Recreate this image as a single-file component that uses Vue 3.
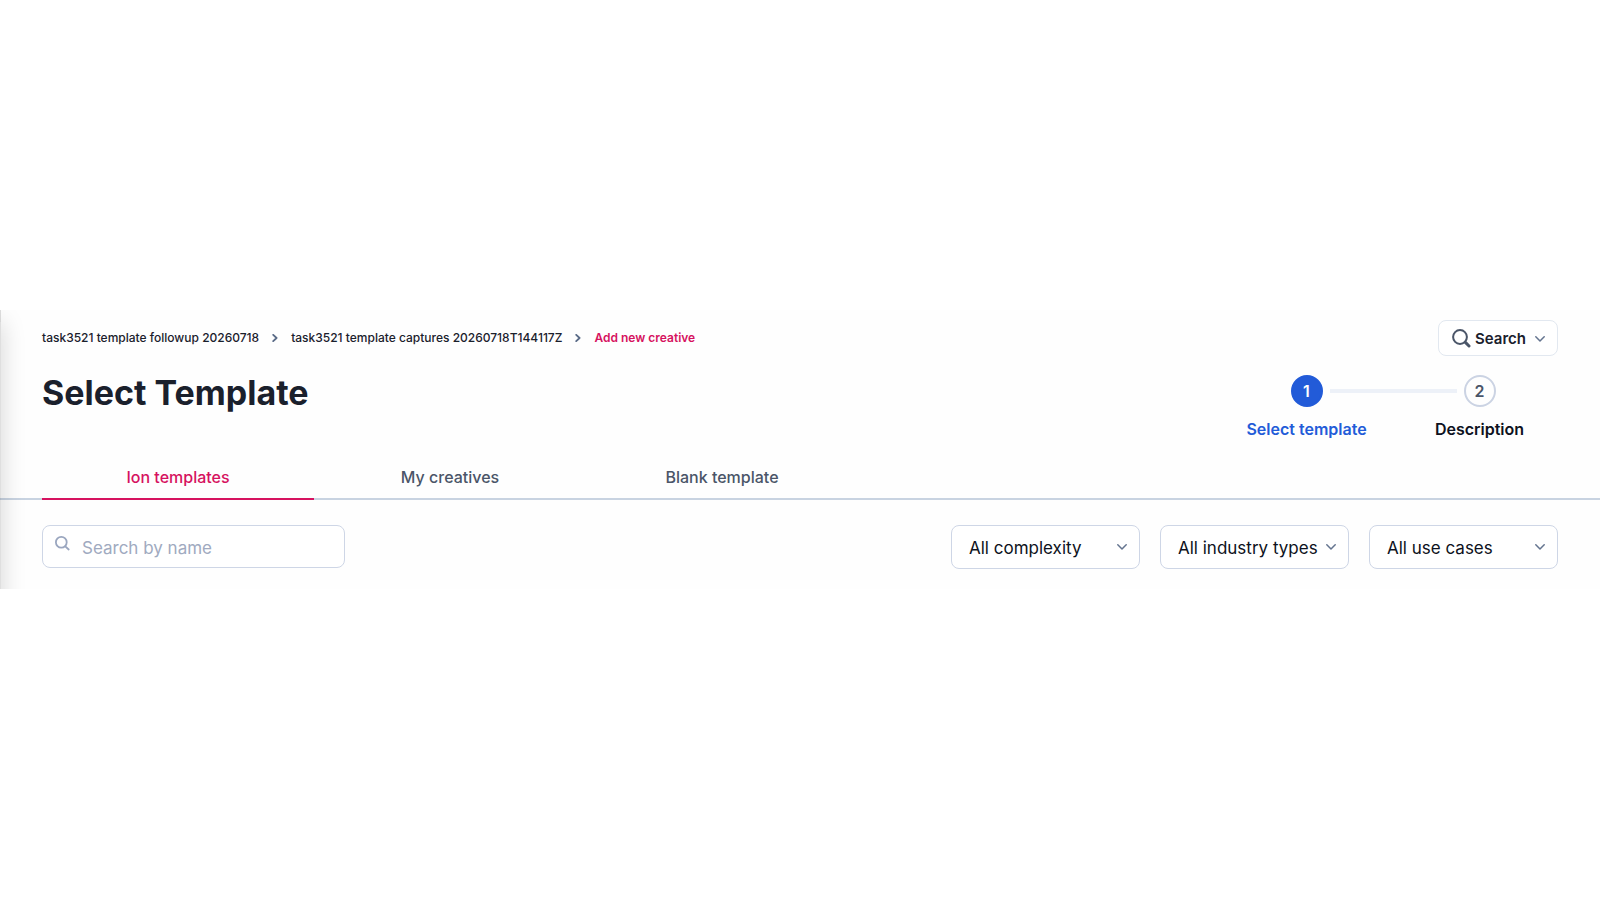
<script setup>
import { ref } from 'vue'

const crumbs = ['task3521 template followup 20260718', 'task3521 template captures 20260718T144117Z']
const steps = ['Select template', 'Description']
const tabs = ['Ion templates', 'My creatives', 'Blank template']
const filters = [
  { id: 'complexity', label: 'Complexity', text: 'All complexity' },
  { id: 'industry', label: 'Industry type', text: 'All industry types' },
  { id: 'usecase', label: 'Use case', text: 'All use cases' },
]
const activeTab = ref(0)
const activeStep = ref(0)
const query = ref('')
</script>

<template>
  <main class="page">
    <section class="panel">
      <div class="topbar">
        <nav class="crumbs" aria-label="Breadcrumb">
          <template v-for="c in crumbs" :key="c">
            <a href="#">{{ c }}</a>
            <svg class="sep" viewBox="0 0 6 8" aria-hidden="true"><path d="M1.2 0.8 4.6 4 1.2 7.2" /></svg>
          </template>
          <a href="#" class="current" aria-current="page">Add new creative</a>
        </nav>
        <button type="button" class="search-btn">
          <svg class="lens" viewBox="0 0 19 19" aria-hidden="true">
            <circle cx="8" cy="8" r="6.9" />
            <path class="handle" d="M13.4 13.4 17 17" />
          </svg>
          <span>Search</span>
          <svg class="chev" viewBox="0 0 10 6" aria-hidden="true"><path d="M0.8 0.8 5 5 9.2 0.8" /></svg>
        </button>
      </div>

      <header class="heading">
        <h1>Select Template</h1>
        <ol class="steps">
          <li v-for="(s, i) in steps" :key="s" :class="{ active: i === activeStep }">
            <div class="track">
              <span class="line" :class="{ hidden: i === 0 }"></span>
              <span class="num">{{ i + 1 }}</span>
              <span class="line" :class="{ hidden: i === steps.length - 1 }"></span>
            </div>
            <span class="step-label">{{ s }}</span>
          </li>
        </ol>
      </header>

      <div class="tabs" role="tablist">
        <button
          v-for="(t, i) in tabs"
          :key="t"
          type="button"
          role="tab"
          :aria-selected="i === activeTab"
          :class="{ active: i === activeTab }"
          @click="activeTab = i"
        >{{ t }}</button>
      </div>

      <div class="filters">
        <div class="search-field">
          <svg viewBox="0 0 15 15" aria-hidden="true">
            <circle cx="6.3" cy="6.3" r="5.4" />
            <path d="M10.3 10.3 13.7 13.5" />
          </svg>
          <input v-model="query" type="text" aria-label="Search by name" placeholder="Search by name" />
        </div>
        <div class="selects">
          <div v-for="f in filters" :key="f.id" class="select">
            <select :id="f.id" :aria-label="f.label">
              <option>{{ f.text }}</option>
            </select>
            <svg class="chev" viewBox="0 0 10 6" aria-hidden="true"><path d="M0.8 0.8 5 5 9.2 0.8" /></svg>
          </div>
        </div>
      </div>
    </section>
  </main>
</template>

<style>
body {
  margin: 0;
  background: #fff;
}
</style>

<style scoped>
.page {
  box-sizing: border-box;
  min-height: 100vh;
  padding-bottom: 1px;
  display: flex;
  flex-direction: column;
  justify-content: center;
  font-family: Inter, "Liberation Sans", sans-serif;
  color: #1a202c;
}
.panel {
  position: relative;
  overflow: hidden;
  padding: 10px 0 20px;
  background: #fefefe;
}
.panel::before {
  content: "";
  position: absolute;
  left: -19px;
  top: 12px;
  bottom: -40px;
  width: 20px;
  box-shadow: 0 0 24px rgba(0, 0, 0, 0.18);
  pointer-events: none;
}
.panel::after {
  content: "";
  position: absolute;
  left: 0;
  top: 0;
  bottom: 0;
  width: 1px;
  background: rgba(0, 0, 0, 0.12);
  pointer-events: none;
}
button,
input,
select {
  font-family: inherit;
  box-sizing: border-box;
}
svg {
  flex: none;
  fill: none;
  stroke-linecap: round;
  stroke-linejoin: round;
}
.topbar,
.heading,
.filters {
  display: flex;
  justify-content: space-between;
  padding: 0 42px;
}
.topbar {
  align-items: center;
}
.crumbs {
  display: flex;
  align-items: center;
  gap: 13px;
  font-size: 12px;
  line-height: 16px;
}
.crumbs a {
  color: #1a202c;
  font-weight: 500;
  text-decoration: none;
}
.crumbs .current {
  color: #d6125f;
  font-weight: 600;
}
.sep {
  width: 6px;
  height: 8px;
  stroke: #5a6b87;
  stroke-width: 1.8;
}
.search-btn {
  display: flex;
  align-items: center;
  height: 36px;
  padding: 1px 12px 0 13px;
  border: 1px solid #e2e8f0;
  border-radius: 8px;
  background: #fff;
  color: #1a202c;
  font-size: 15px;
  font-weight: 600;
}
.lens {
  width: 19px;
  height: 19px;
  margin-right: 4px;
  stroke: #4a5568;
  stroke-width: 2;
}
.handle {
  stroke-width: 3;
}
.chev {
  width: 10px;
  height: 6px;
  stroke: #64748f;
  stroke-width: 1.5;
}
.search-btn .chev {
  margin-left: 9px;
}
.heading {
  padding-top: 19px;
}
h1 {
  margin: 0;
  font-size: 34px;
  line-height: 36px;
  font-weight: 700;
}
.steps {
  display: flex;
  list-style: none;
  margin: 0 -8px 0 0;
  padding: 0;
}
.steps li {
  width: 173px;
  text-align: center;
}
.track {
  display: flex;
  align-items: center;
  gap: 7px;
}
.line {
  flex: 1;
  height: 4px;
  background: #edf1f8;
}
.line.hidden {
  visibility: hidden;
}
.num {
  box-sizing: border-box;
  width: 32px;
  height: 32px;
  border: 2px solid #cbd3e3;
  border-radius: 50%;
  line-height: 28px;
  font-size: 16px;
  font-weight: 600;
  color: #4a5568;
}
.active .num {
  border-color: #225bd8;
  background: #225bd8;
  color: #fff;
}
.step-label {
  display: block;
  margin-top: 12px;
  font-size: 16px;
  line-height: 20px;
  font-weight: 600;
  color: #0d1120;
}
.active .step-label {
  color: #225bd8;
}
.tabs {
  display: flex;
  margin-top: 16px;
  padding: 0 42px;
  box-shadow: inset 0 -2px #c8d3e1;
}
.tabs button {
  width: 272px;
  height: 45px;
  padding: 0;
  border: 0;
  border-bottom: 2px solid transparent;
  background: none;
  color: #4a5568;
  font-size: 16px;
  font-weight: 500;
}
.tabs .active {
  border-color: #d6125f;
  color: #d6125f;
}
.filters {
  align-items: flex-start;
  padding-top: 25px;
}
.search-field,
.select {
  position: relative;
}
.search-field svg {
  position: absolute;
  left: 13px;
  top: 11px;
  width: 15px;
  height: 15px;
  stroke: #9aa6bf;
  stroke-width: 1.8;
}
input {
  display: block;
  width: 303px;
  height: 43px;
  padding: 2px 16px 0 39px;
  border: 1px solid #ced6e6;
  border-radius: 8px;
  background: #fff;
  font-size: 17px;
  color: #1a202c;
}
input::placeholder {
  color: #a0aac0;
  opacity: 1;
}
.selects {
  display: flex;
  gap: 20px;
}
select {
  display: block;
  appearance: none;
  width: 189px;
  height: 44px;
  padding: 1px 17px 0;
  border: 1px solid #ced6e6;
  border-radius: 8px;
  background: #fff;
  color: #0d1120;
  font-size: 17px;
}
.select .chev {
  position: absolute;
  right: 13px;
  top: 19px;
  pointer-events: none;
}
</style>
